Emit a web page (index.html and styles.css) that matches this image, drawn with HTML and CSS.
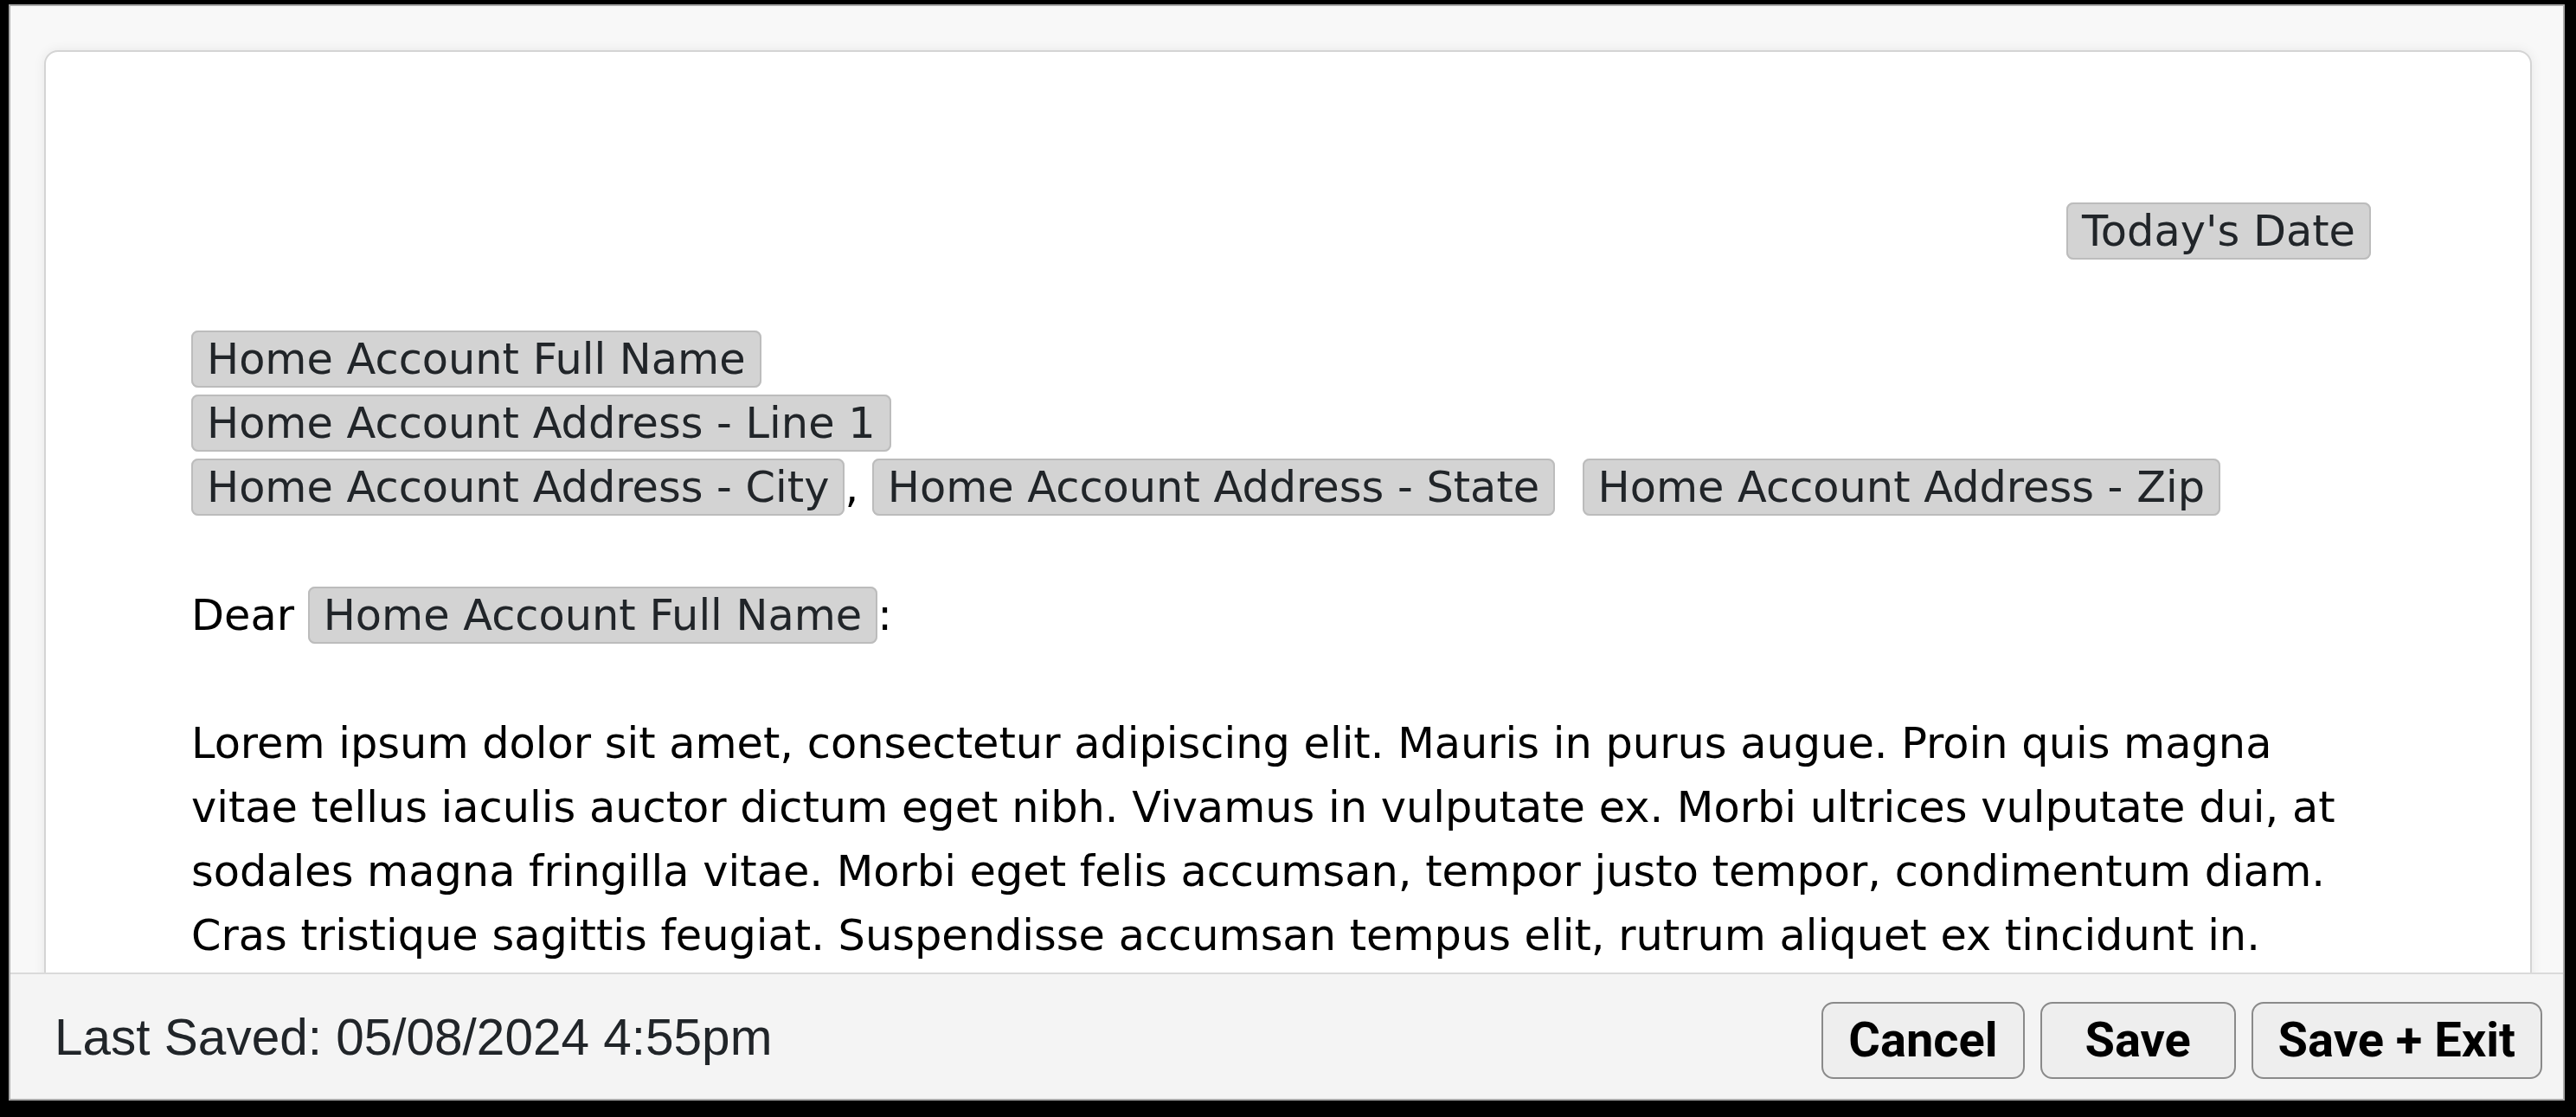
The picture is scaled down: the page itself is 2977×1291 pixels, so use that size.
FILE: index.html
```html
<!DOCTYPE html>
<html lang="en">
<head>
<meta charset="utf-8">
<title>Letter Editor</title>
<link rel="stylesheet" href="styles.css">
</head>
<body>
<div class="window">
  <div class="scroll">
    <div class="card">
      <p class="date-line"><span class="chip">Today's Date</span></p>
      <p class="blank">&nbsp;</p>
      <p><span class="chip">Home Account Full Name</span><br><span class="chip">Home Account Address - Line 1</span><br><span class="chip">Home Account Address - City</span>, <span class="chip">Home Account Address - State</span>&nbsp; <span class="chip">Home Account Address - Zip</span></p>
      <p class="blank">&nbsp;</p>
      <p>Dear <span class="chip">Home Account Full Name</span>:</p>
      <p class="blank">&nbsp;</p>
      <p>Lorem ipsum dolor sit amet, consectetur adipiscing elit. Mauris in purus augue. Proin quis magna vitae tellus iaculis auctor dictum eget nibh. Vivamus in vulputate ex. Morbi ultrices vulputate dui, at sodales magna fringilla vitae. Morbi eget felis accumsan, tempor justo tempor, condimentum diam. Cras tristique sagittis feugiat. Suspendisse accumsan tempus elit, rutrum aliquet ex tincidunt in.</p>
    </div>
  </div>
  <div class="footer">
    <div class="saved">Last Saved: 05/08/2024 4:55pm</div>
    <div class="actions">
      <button class="btn">Cancel</button>
      <button class="btn">Save</button>
      <button class="btn">Save + Exit</button>
    </div>
  </div>
</div>
</body>
</html>
```

FILE: styles.css
```css
html, body {
  margin: 0;
  padding: 0;
}
body {
  background: #000;
  height: 1291px;
  overflow: hidden;
}
.window {
  box-sizing: border-box;
  margin: 5px 13px 0 10px;
  height: 1267px;
  border: 2px solid #a9a9a9;
  background: #f8f8f8;
  display: flex;
  flex-direction: column;
}
.scroll {
  flex: 1;
  min-height: 0;
  overflow: hidden;
  padding: 51px 36px 0 39px;
}
.card {
  min-height: 1200px;
  background: #fff;
  border: 2px solid #d4d4d4;
  border-radius: 16px;
  box-shadow: 0 0 14px rgba(0, 0, 0, 0.07);
  padding: 170px 184px 0 168px;
  font-family: "DejaVu Sans", Verdana, sans-serif;
  font-size: 49.4px;
  line-height: 74px;
  color: #000;
}
.card p {
  margin: 0;
}
.date-line {
  text-align: right;
}
.chip {
  background: #d3d3d3;
  border: 2px solid #bcbcbc;
  border-radius: 8px;
  padding: 2px 16px;
  color: #212529;
}
.footer {
  flex: none;
  height: 144px;
  border-top: 2px solid #dadada;
  background: #f4f4f4;
  display: flex;
  align-items: center;
  justify-content: space-between;
  padding: 0 24px 0 51px;
}
.saved {
  font-family: "Liberation Sans", Arial, Helvetica, sans-serif;
  font-size: 58.5px;
  color: #212529;
}
.actions {
  display: flex;
  gap: 18px;
  padding-top: 8px;
}
.btn {
  height: 89px;
  min-width: 226px;
  padding: 0 29px;
  border: 2px solid #8a8a8a;
  border-radius: 14px;
  background: #eeeeee;
  color: #000;
  font-family: Roboto, "Liberation Sans", sans-serif;
  font-weight: 700;
  font-size: 56px;
  line-height: 1;
}
```
